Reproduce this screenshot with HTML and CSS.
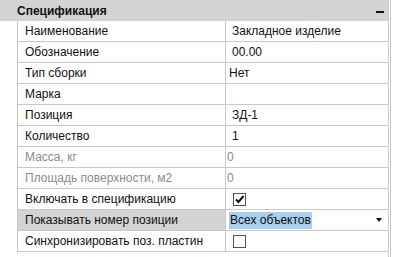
FILE: index.html
```html
<!DOCTYPE html>
<html>
<head>
<meta charset="utf-8">
<link rel="stylesheet" href="styles.css">
</head>
<body>
<div class="panel">
  <div class="header">
    <span class="title">Спецификация</span>
    <span class="collapse"></span>
  </div>
  <div class="grid">
    <div class="row"><div class="label">Наименование</div><div class="value">Закладное изделие</div></div>
    <div class="row"><div class="label">Обозначение</div><div class="value">00.00</div></div>
    <div class="row"><div class="label">Тип сборки</div><div class="value pad-s">Нет</div></div>
    <div class="row"><div class="label">Марка</div><div class="value"></div></div>
    <div class="row"><div class="label">Позиция</div><div class="value">ЗД-1</div></div>
    <div class="row"><div class="label">Количество</div><div class="value">1</div></div>
    <div class="row"><div class="label muted">Масса, кг</div><div class="value muted pad-xs">0</div></div>
    <div class="row"><div class="label muted">Площадь поверхности, м2</div><div class="value muted pad-xs">0</div></div>
    <div class="row"><div class="label">Включать в спецификацию</div><div class="value"><span class="check checked"><svg width="11" height="11" viewBox="0 0 11 11"><path d="M2 5.5 L4.5 8 L9.5 2" fill="none" stroke="#111" stroke-width="2"/></svg></span></div></div>
    <div class="row selected"><div class="label">Показывать номер позиции</div><div class="value combo pad-s"><span class="sel">Всех объектов</span><span class="arrow"></span></div></div>
    <div class="row"><div class="label">Синхронизировать поз. пластин</div><div class="value"><span class="check"></span></div></div>
  </div>
</div>
</body>
</html>
```
FILE: styles.css
```css
html, body {
  margin: 0;
  padding: 0;
  background: #ffffff;
}
body {
  font-family: "Liberation Sans", Arial, sans-serif;
  font-size: 12px;
  color: #111;
}
.panel {
  width: 389px;
  height: 257px;
  border-right: 1px solid #d0d0d0;
  box-sizing: border-box;
  position: relative;
}
.panel::after {
  content: "";
  position: absolute;
  top: 0;
  right: -3px;
  width: 1px;
  height: 257px;
  background: #c8c8c8;
}
.header {
  height: 21px;
  background: #d3d3d3;
  display: flex;
  align-items: center;
  justify-content: space-between;
  padding-left: 17px;
}
.title {
  font-weight: bold;
  color: #111;
}
.collapse {
  width: 8px;
  height: 2px;
  background: #111;
  margin-right: 4px;
  margin-top: 3px;
}
.grid {
  display: flex;
  flex-direction: column;
  padding-left: 17px;
}
.row {
  display: grid;
  grid-template-columns: 208px 1fr;
  height: 21px;
  box-sizing: border-box;
  border-bottom: 1px solid #c8c8c8;
}
.label {
  border-left: 1px solid #c8c8c8;
  padding-left: 7px;
  display: flex;
  align-items: center;
  white-space: nowrap;
  overflow: hidden;
}
.value {
  border-left: 1px solid #c8c8c8;
  padding-left: 6px;
  display: flex;
  align-items: center;
  white-space: nowrap;
}
.pad-s { padding-left: 3px; }
.pad-xs { padding-left: 1px; }
.muted { color: #8a8a8a; }
.selected .label {
  background: #d3d3d3;
}
.check {
  width: 11px;
  height: 11px;
  border: 1px solid #555;
  display: inline-flex;
  align-items: center;
  justify-content: center;
  margin-left: 1px;
  background: #fff;
}
.combo {
  justify-content: space-between;
  padding-right: 6px;
}
.sel {
  background: #a6cff2;
  padding: 1px 1px;
  line-height: 15px;
}
.arrow {
  width: 0;
  height: 0;
  border-left: 3.5px solid transparent;
  border-right: 3.5px solid transparent;
  border-top: 4px solid #111;
}
```
